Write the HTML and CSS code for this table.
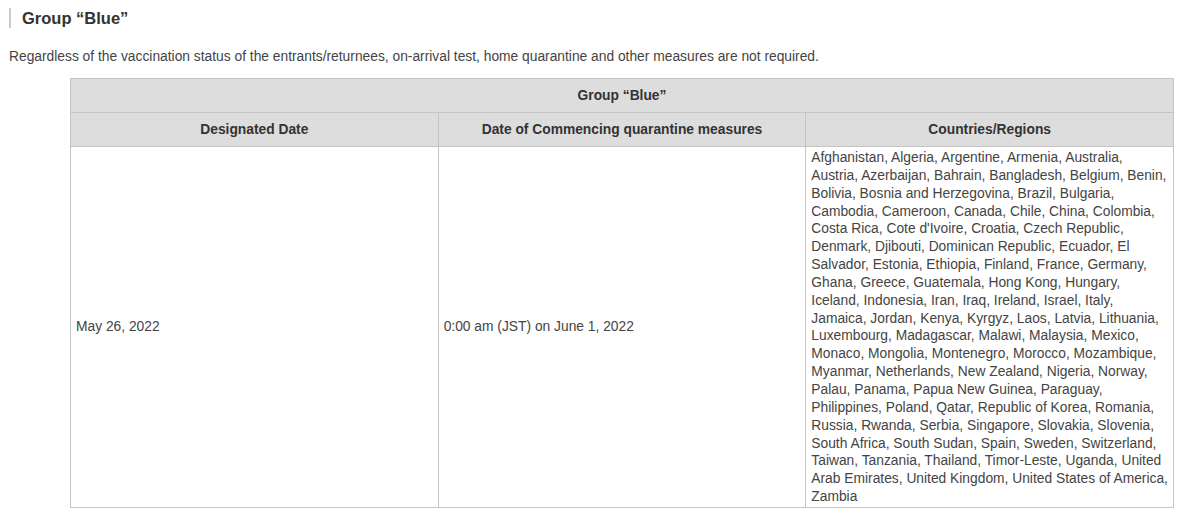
FILE: index.html
```html
<!DOCTYPE html>
<html lang="en">
<head>
  <meta charset="UTF-8" />
  <title>Group “Blue”</title>
  <link rel="stylesheet" href="styles.css">
</head>
<body>
  <div class="section">
    <h3 class="section-title">Group “Blue”</h3>
    <p class="lead">Regardless of the vaccination status of the entrants/returnees, on-arrival test, home quarantine and other measures are not required.</p>

    <table class="group-table">
      <thead>
        <tr>
          <th colspan="3">Group “Blue”</th>
        </tr>
        <tr>
          <th>Designated Date</th>
          <th>Date of Commencing quarantine measures</th>
          <th>Countries/Regions</th>
        </tr>
      </thead>
      <tbody>
        <tr>
          <td>May 26, 2022</td>
          <td>0:00 am (JST) on June 1, 2022</td>
          <td class="countries">Afghanistan, Algeria, Argentine, Armenia, Australia, Austria, Azerbaijan, Bahrain, Bangladesh, Belgium, Benin, Bolivia, Bosnia and Herzegovina, Brazil, Bulgaria, Cambodia, Cameroon, Canada, Chile, China, Colombia, Costa Rica, Cote d'Ivoire, Croatia, Czech Republic, Denmark, Djibouti, Dominican Republic, Ecuador, El Salvador, Estonia, Ethiopia, Finland, France, Germany, Ghana, Greece, Guatemala, Hong Kong, Hungary, Iceland, Indonesia, Iran, Iraq, Ireland, Israel, Italy, Jamaica, Jordan, Kenya, Kyrgyz, Laos, Latvia, Lithuania, Luxembourg, Madagascar, Malawi, Malaysia, Mexico, Monaco, Mongolia, Montenegro, Morocco, Mozambique, Myanmar, Netherlands, New Zealand, Nigeria, Norway, Palau, Panama, Papua New Guinea, Paraguay, Philippines, Poland, Qatar, Republic of Korea, Romania, Russia, Rwanda, Serbia, Singapore, Slovakia, Slovenia, South Africa, South Sudan, Spain, Sweden, Switzerland, Taiwan, Tanzania, Thailand, Timor-Leste, Uganda, United Arab Emirates, United Kingdom, United States of America, Zambia</td>
        </tr>
      </tbody>
    </table>
  </div>
</body>
</html>
```

FILE: styles.css
```css
body {
  font-family: "Liberation Sans", Arial, sans-serif;
  font-size: 13.8px;
  color: #444;
  background: #fff;
  margin: 0;
  padding: 0;
}

.section {
  padding: 8px 0 0 9px;
}

.section-title {
  margin: 0;
  padding: 1px 0 1px 11px;
  border-left: 2px solid #ccc;
  font-size: 16.5px;
  line-height: 18px;
  color: #333;
}

.lead {
  margin: 21px 0 13px;
  line-height: 16px;
}

.group-table {
  margin-left: 61px;
  width: 1104px;
  border-collapse: collapse;
  table-layout: fixed;
}

.group-table th,
.group-table td {
  border: 1px solid #c4c4c4;
  line-height: 18px;
}

.group-table th {
  background: #ddd;
  color: #333;
  font-weight: bold;
  height: 33px;
  padding: 0 5px;
}

.group-table td {
  padding: 0 5px;
  vertical-align: middle;
}

.group-table td.countries {
  padding: 2px 5px 1px;
  line-height: 17.85px;
}
```
